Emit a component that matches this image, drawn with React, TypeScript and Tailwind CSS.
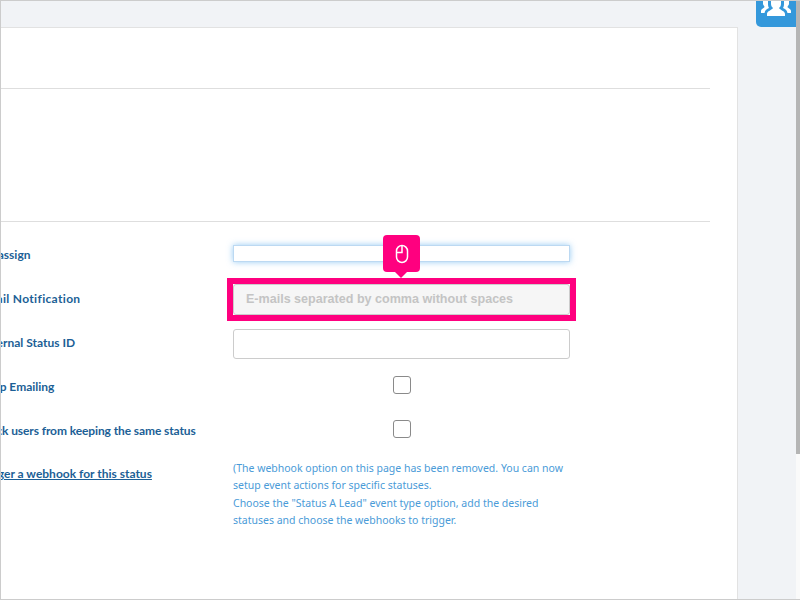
const labelFont = "font-['Noto_Sans',sans-serif]";

function Row({ label, offset, children }: { label: string; offset: string; children: React.ReactNode }) {
  return (
    <div className="flex items-center h-[44px]">
      <div className="w-[233px] shrink-0 overflow-hidden">
        <div className={`${offset} whitespace-nowrap font-['Lato',sans-serif] text-[12px] font-bold text-[#1c5f96]`}>{label}</div>
      </div>
      <div className="w-[337px] shrink-0 flex justify-center">{children}</div>
    </div>
  );
}

function Box() {
  return <div className="w-[18px] h-[18px] mb-[4px] rounded-[3px] border border-[#8a8a8a] bg-white" />;
}

export default function App() {
  return (
    <div className={`relative w-[800px] h-[600px] overflow-hidden bg-[#f1f3f6] border-t border-b border-l border-[#cccccc] ${labelFont}`}>
      <div className="absolute right-0 top-0 bottom-0 w-[4px] bg-[#fafafa]">
        <div className="h-[453px] w-full bg-[#b5b5b5]" />
      </div>
      <div className="absolute right-[4px] top-0 w-[40px] h-[26px] rounded-bl-[5px] bg-[#3498db] overflow-hidden flex justify-center">
        <svg width="32" height="16" viewBox="0 0 32 16" fill="#ffffff">
          <path d="M11 0h10v3c0 2-1 3-2 4 1 2 6 3 6 6v2H7v-2c0-3 5-4 6-6-1-1-2-2-2-4z" />
          <path d="M3 0h5v3c0 2 .5 3 1 4-2 1-4 2-4.500 5H1v-2c0-2 3-3 3.500-4 0-1-1.500-2-1.500-3z" />
          <path d="M29 0h-5v3c0 2-.5 3-1 4 2 1 4 2 4.500 5H31v-2c0-2-3-3-3.500-4 0-1 1.500-2 1.500-3z" />
        </svg>
      </div>
      <div className="w-[738px] h-[600px] ml-[-1px] mt-[26px] bg-white border-t border-r border-[#e2e2e2]">
        <div className="h-[61px] w-[710px] border-b border-[#dedede]" />
        <div className="h-[133px] w-[710px] border-b border-[#dedede]" />
        <div className="pt-[11px]">
          <Row label="Reassign" offset="ml-[-16px]">
            <div className="w-[337px] h-[17px] mb-[4px] bg-white border border-[#bcd9f2] shadow-[0_0_6px_rgba(82,168,236,0.6)]" />
          </Row>
          <Row label="Email Notification" offset="ml-[-21px] tracking-[0.33px]">
            <div className="w-[337px] h-[31px] rounded-[3px] border border-[#cccccc] bg-[#f6f6f6] pl-[12px] flex items-center font-['Liberation_Sans',sans-serif] text-[12.56px] font-bold text-[#c4c4c4]">
              E-mails separated by comma without spaces
            </div>
          </Row>
          <Row label="External Status ID" offset="ml-[-21px]">
            <div className="w-[337px] h-[30px] mt-[2px] rounded-[3px] border border-[#cccccc] bg-white" />
          </Row>
          <Row label="Stop Emailing" offset="ml-[-18px]"><Box /></Row>
          <Row label="Block users from keeping the same status" offset="ml-[-21px] tracking-[-0.1px]"><Box /></Row>
          <div className="flex pt-[7px]">
            <div className="w-[233px] shrink-0 overflow-hidden pt-[5px]">
              <div className="ml-[-22px] whitespace-nowrap font-['Lato',sans-serif] text-[12px] font-bold text-[#1c5f96] underline">Trigger a webhook for this status</div>
            </div>
            <div className="w-[337px] text-[10.5px] leading-[17.3px] text-[#4a9bd8]">
              (The webhook option on this page has been removed. You can now setup event actions for specific statuses.<br />
              Choose the "Status A Lead" event type option, add the desired statuses and choose the webhooks to trigger.
            </div>
          </div>
        </div>
      </div>
      <div className="absolute left-[226px] top-[277px] w-[349px] h-[43px] border-[6px] border-[#ff007f]" />
      <div className="absolute left-[382px] top-[234px] w-[37px] h-[37px] rounded-[4px] bg-[#ff007f] flex items-center justify-center">
        <svg width="14" height="20" viewBox="0 0 14 20" fill="none" stroke="#ffffff" strokeWidth="1.5">
          <rect x="1.5" y="1.5" width="11" height="17" rx="5.5" />
          <path d="M7 1.5v7H1.5" />
        </svg>
        <div className="absolute left-[12px] top-[37px] w-0 h-0 border-l-[6px] border-r-[6px] border-t-[6px] border-l-transparent border-r-transparent border-t-[#ff007f]" />
      </div>
    </div>
  );
}
